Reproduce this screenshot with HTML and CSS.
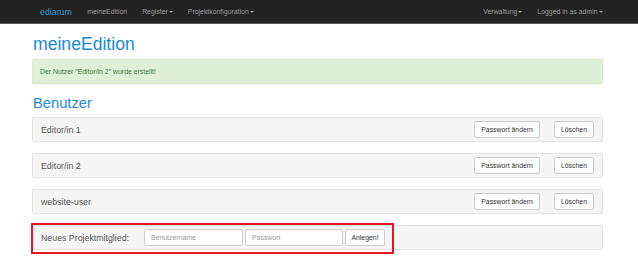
FILE: index.html
```html
<!DOCTYPE html>
<html lang="de">
<head>
  <meta charset="UTF-8" />
  <title>meineEdition - ediarum</title>
  <link rel="stylesheet" href="styles.css">
</head>
<body>
  <nav class="navbar">
    <div class="nav-inner">
      <a class="brand" href="#">ediarum</a>
      <a class="nav-link" href="#">meineEdition</a>
      <a class="nav-link" href="#">Register<span class="caret"></span></a>
      <a class="nav-link" href="#">Projektkonfiguration<span class="caret"></span></a>
      <div class="nav-right">
        <a class="nav-link" href="#">Verwaltung<span class="caret"></span></a>
        <a class="nav-link" href="#">Logged in as admin<span class="caret"></span></a>
      </div>
    </div>
  </nav>

  <div class="container">
    <h1>meineEdition</h1>
    <div class="alert">Der Nutzer "Editor/in 2" wurde erstellt!</div>

    <h2>Benutzer</h2>

    <div class="well">
      <span class="user-name">Editor/in 1</span>
      <div class="actions">
        <button class="btn">Passwort ändern</button>
        <button class="btn">Löschen</button>
      </div>
    </div>

    <div class="well">
      <span class="user-name">Editor/in 2</span>
      <div class="actions">
        <button class="btn">Passwort ändern</button>
        <button class="btn">Löschen</button>
      </div>
    </div>

    <div class="well">
      <span class="user-name">website-user</span>
      <div class="actions">
        <button class="btn">Passwort ändern</button>
        <button class="btn">Löschen</button>
      </div>
    </div>

    <div class="well new-member">
      <label class="new-label" for="username">Neues Projektmitglied:</label>
      <div class="new-form">
        <input type="text" id="username" placeholder="Benutzername" />
        <input type="password" id="password" placeholder="Passwort" />
        <button class="btn">Anlegen!</button>
      </div>
      <div class="highlight"></div>
    </div>
  </div>
</body>
</html>
```

FILE: styles.css
```css
* {
  box-sizing: border-box;
}

body {
  margin: 0;
  background: #fff;
  color: #555;
  font-family: "Liberation Sans", Arial, sans-serif;
  font-size: 6.9px;
}

a {
  text-decoration: none;
}

.navbar {
  height: 24px;
  background: #222;
  border-bottom: 1px solid #5a5a5a;
}

.nav-inner {
  display: flex;
  align-items: center;
  height: 23px;
  padding: 0 28px 0 32px;
}

.brand {
  color: #2a9fd6;
  font-size: 8.8px;
  padding: 0 8px;
}

.nav-link {
  color: #9d9d9d;
  padding: 0 7.5px;
  display: flex;
  align-items: center;
}

.nav-right {
  margin-left: auto;
  display: flex;
}

.caret {
  display: inline-block;
  width: 0;
  height: 0;
  margin-left: 1px;
  margin-top: 1px;
  border-top: 2px solid #9d9d9d;
  border-left: 2px solid transparent;
  border-right: 2px solid transparent;
}

.container {
  width: 603px;
  padding-left: 32px;
}

h1 {
  margin: 11px 0 5px 1px;
  font-size: 17.6px;
  line-height: 19px;
  font-weight: normal;
  color: #2089d6;
}

.alert {
  height: 25px;
  padding: 0 7px;
  display: flex;
  align-items: center;
  background: #dff0d8;
  border: 1px solid #d6e9c6;
  border-radius: 2px;
  color: #3c763d;
}

h2 {
  margin: 11px 0 6px 1px;
  font-size: 14.7px;
  line-height: 16px;
  font-weight: normal;
  color: #2089d6;
}

.well {
  height: 25px;
  margin-bottom: 11px;
  padding: 0 8px;
  display: flex;
  align-items: center;
  justify-content: space-between;
  background: #f5f5f5;
  border: 1px solid #e3e3e3;
  border-radius: 2px;
}

.user-name {
  font-size: 8.8px;
  color: #555;
}

.actions {
  display: flex;
  gap: 14px;
}

.btn {
  height: 17px;
  padding: 0 6px;
  background: #fff;
  border: 1px solid #ccc;
  border-radius: 2px;
  color: #333;
  font-family: "Liberation Sans", Arial, sans-serif;
  font-size: 6.9px;
}

.new-member {
  position: relative;
  justify-content: flex-start;
}

.new-label {
  font-size: 8.8px;
  color: #555;
  margin-right: 15px;
}

.new-form {
  display: flex;
  gap: 2px;
}

.new-form input {
  width: 99px;
  height: 17px;
  padding: 0 6px;
  border: 1px solid #ccc;
  border-radius: 2px;
  font-family: "Liberation Sans", Arial, sans-serif;
  font-size: 6.9px;
  color: #555;
}

.new-form input + input {
  width: 98px;
}

.new-form input::placeholder {
  color: #999;
}

.new-form .btn {
  width: 40px;
  padding: 0;
}

.highlight {
  position: absolute;
  left: -2px;
  top: -3px;
  width: 363px;
  height: 31px;
  border: 2px solid #e3161f;
  pointer-events: none;
}
```
